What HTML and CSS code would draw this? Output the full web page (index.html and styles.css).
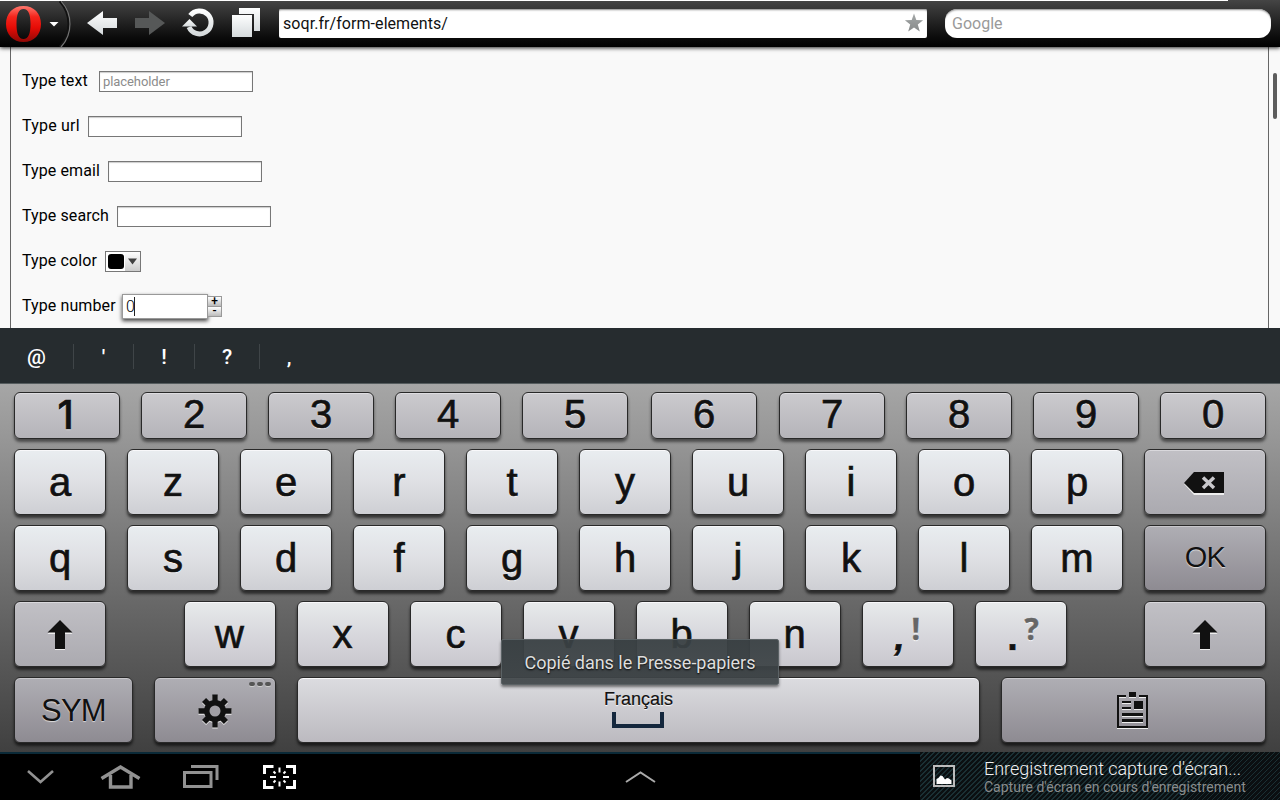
FILE: index.html
```html
<!DOCTYPE html>
<html lang="fr">
<head>
<meta charset="utf-8">
<title>Form elements</title>
<link rel="stylesheet" href="styles.css">
</head>
<body>
<svg width="0" height="0" class="defs">
  <defs>
    <linearGradient id="white" x1="0" y1="0" x2="0" y2="1"><stop offset="0" stop-color="#fdfefe"/><stop offset="1" stop-color="#d5dadc"/></linearGradient>
    <linearGradient id="red" x1="0" y1="0" x2="0" y2="1"><stop offset="0" stop-color="#ff7a70"/><stop offset=".3" stop-color="#f4251c"/><stop offset=".6" stop-color="#e60c06"/><stop offset="1" stop-color="#8e0806"/></linearGradient>
    <linearGradient id="star" x1="0" y1="0" x2="0" y2="1"><stop offset="0" stop-color="#a4a8a8"/><stop offset="1" stop-color="#878a8a"/></linearGradient>
  </defs>
</svg>
<header class="toolbar">
  <div class="progress"></div>
  <svg class="tools" width="278" height="46" viewBox="0 1 278 46">
    <path d="M60 1A34 34 0 0 1 60 47" fill="none" stroke="#111" stroke-width="3"/>
    <path d="M61 1A34 34 0 0 1 61 47" fill="none" stroke="#747474" stroke-width="1.200"/>
    <path d="M23.500 6C13 6 6 13.500 6 24s7 18 17.500 18S41 34.500 41 24 34 6 23.500 6zm0 3c5 0 7 5.500 7 15s-2 15-7 15-7-5.500-7-15 2-15 7-15z" fill="url(#red)" fill-rule="evenodd"/>
    <path d="M49.500 22h9l-4.500 4.500z" fill="#fff"/>
    <path d="M87 23L103 11v7h14v10h-14v7z" fill="url(#white)"/>
    <path d="M165 23L149 11v7h-14v10h14v7z" fill="#565858"/>
    <path d="M190.300 15.600A11.500 11.500 0 1 1 189 27" fill="none" stroke="url(#white)" stroke-width="5"/>
    <path d="M182 26.500L189.500 19l7.500 7.500z" fill="url(#white)"/>
    <path d="M239 8h21v23h-6V14h-15z" fill="url(#white)"/>
    <path d="M232 15h20v22h-20z" fill="url(#white)"/>
  </svg>
  <div class="address"><span>soqr.fr/form-elements/</span>
    <svg width="20" height="20" viewBox="0 0 20 20"><path d="M10 0.500l2.300 6.600 6.800.1-5.300 4.200 2 7L10 14.400 4.200 18.400l2-7L.9 7.200l6.800-.1z" fill="url(#star)"/></svg>
  </div>
  <div class="search">Google</div>
</header>
<main class="page">
  <form class="sheet">
    <div class="field f-text"><label>Type text</label><span class="box ph">placeholder</span></div>
    <div class="field f-url"><label>Type url</label><span class="box"></span></div>
    <div class="field f-email"><label>Type email</label><span class="box"></span></div>
    <div class="field f-search"><label>Type search</label><span class="box"></span></div>
    <div class="field f-color"><label>Type color</label><span class="color"><i class="swatch"></i><i class="drop"><svg width="9" height="7" viewBox="0 0 9 7"><path d="M0 .5h9L4.500 6.500z" fill="#404040"/></svg></i></span></div>
    <div class="field f-number"><label>Type number</label><span class="number">0<i class="caret"></i></span><span class="spin"><b>+</b><b>-</b></span></div>
  </form>
  <div class="scroll"></div>
</main>
<section class="suggest"><span class="s1">@</span><span class="s2">'</span><span class="s3">!</span><span class="s4">?</span><span class="s5">,</span></section>
<section class="keyboard">
  <div class="row nums"><div class="key num one">1</div><div class="key num">2</div><div class="key num">3</div><div class="key num">4</div><div class="key num">5</div><div class="key num">6</div><div class="key num">7</div><div class="key num">8</div><div class="key num">9</div><div class="key num">0</div></div>
  <div class="row"><div class="key">a</div><div class="key">z</div><div class="key">e</div><div class="key">r</div><div class="key">t</div><div class="key">y</div><div class="key">u</div><div class="key">i</div><div class="key">o</div><div class="key">p</div>
    <div class="key mid wide erase"><svg width="42" height="24" viewBox="0 0 42 24"><path d="M1 12L11 2h30v21H11z" fill="#eee"/><path d="M1 11L11 0h30v21H11z" fill="#111"/><path d="M20 5.500l11 10.500M31 5.500L20 16" stroke="#c8c7cb" stroke-width="3.500"/></svg></div></div>
  <div class="row"><div class="key">q</div><div class="key">s</div><div class="key">d</div><div class="key">f</div><div class="key">g</div><div class="key">h</div><div class="key">j</div><div class="key">k</div><div class="key">l</div><div class="key">m</div><div class="key dark wide word ok">OK</div></div>
  <div class="row shiftrow"><div class="key mid"><svg width="26" height="31" viewBox="0 0 26 31"><path d="M13 1l12.500 13H18v16H8V14H.5z" fill="#eee"/><path d="M13 0l12.500 12.500H18V29H8V12.500H.5z" fill="#111"/></svg></div>
    <div class="letters"><div class="key">w</div><div class="key">x</div><div class="key">c</div><div class="key">v</div><div class="key">b</div><div class="key">n</div><div class="key duo"><span class="main comma">,</span><span class="alt">!</span></div><div class="key duo"><span class="main">.</span><span class="alt">?</span></div></div>
    <div class="key mid wide"><svg width="26" height="31" viewBox="0 0 26 31"><path d="M13 1l12.500 13H18v16H8V14H.5z" fill="#eee"/><path d="M13 0l12.500 12.500H18V29H8V12.500H.5z" fill="#111"/></svg></div></div>
  <div class="row last"><div class="key dark sym word">SYM</div>
    <div class="key dark wide gear"><svg width="34" height="35" viewBox="-17 -17 34 35">
      <g fill="#eee" transform="translate(0 1)"><circle r="11"/><path d="M-2.700-16.500h5.400v33h-5.400zM-16.500-2.700v5.400h33v-5.400z"/><path d="M-2.900-15.500h5.800v31h-5.800zM-15.500-2.900v5.800h31v-5.800z" transform="rotate(45)"/></g>
      <g fill="#111"><circle r="11"/><path d="M-2.700-16.500h5.400v33h-5.400zM-16.500-2.700v5.400h33v-5.400z"/><path d="M-2.900-15.500h5.800v31h-5.800zM-15.500-2.900v5.800h31v-5.800z" transform="rotate(45)"/></g><circle r="5.500" fill="#a19fa5"/></svg>
      <span class="dots"><i></i><i></i><i></i></span></div>
    <div class="key space"><span>Français</span><i></i></div>
    <div class="key dark clip"><svg width="31" height="37" viewBox="0 0 31 37"><path d="M9 5H1v31h29V5h-8" stroke="#eee" fill="none" stroke-width="2"/><path d="M12 5.500h7M5 11.500h9M5 17.500h9M17 17.500h9M5 24.500h21M5 30.500h21" stroke="#eee" stroke-width="1"/><path d="M9 4H1v31h29V4h-8" fill="none" stroke="#111" stroke-width="2"/><path d="M12 0h7v5h-7zM17 9h9v8h-9zM5 9h9v2H5zM5 15h9v2H5zM5 21h21v3H5zM5 27h21v3H5z" fill="#111"/></svg></div></div>
  <div class="toast">Copié dans le Presse-papiers</div>
</section>
<footer class="sysbar">
  <svg class="nav" width="660" height="46" viewBox="0 754 660 46" fill="none" stroke="#929292">
    <path d="M28 771l12.500 11L53 771" stroke-width="2.600"/>
    <path d="M101.500 778.500L120.500 767l19 11.500M110.500 775v12h20.500v-12" stroke-width="3.400"/>
    <path d="M184.500 772.500h26.500v14h-26.500zM191 766.500h26V780" stroke-width="3"/>
    <g stroke="#fff"><path d="M264.500 774v-7.500h9M286 766.500h8.500v7.500M264.500 780v7.500h9M286 787.500h8.500V780" stroke-width="3"/><path d="M279.500 767.500v5M279.500 781.500v5M270 777h6M283 777h6M273.500 771.500l2 2M285.500 771.500l-2 2M273.500 782.500l2-2M285.500 782.500l-2-2" stroke-width="2"/></g>
    <path d="M626 782l14.500-9.500L655 782" stroke-width="2" stroke="#aaa"/>
  </svg>
  <div class="notice">
    <svg width="22" height="22" viewBox="0 0 22 22"><path d="M1 1h20v20H1z" fill="none" stroke="#bcbcbc" stroke-width="2"/><path d="M3.500 19v-5l2-1 2-2.500 2 .5 2.500 3.500 2-1.500 2 .5 2.500 2V19z" fill="#fff"/></svg>
    <div><p class="title">Enregistrement capture d'écran...</p><p class="sub">Capture d'écran en cours d'enregistrement</p></div>
  </div>
</footer>
</body>
</html>
```
FILE: styles.css
```css
* { box-sizing: border-box; }
body { margin: 0; width: 1280px; height: 800px; overflow: hidden; background: #000; font-family: Roboto, "Liberation Sans", sans-serif; display: flex; flex-direction: column; }
i, b { font-style: normal; font-weight: normal; }
.defs { position: absolute; }
.toolbar { position: relative; z-index: 2; flex: none; height: 47px; padding-top: 1px; display: flex; align-items: flex-start; background: linear-gradient(#454545, #242424 45%, #0b0b0b 80%, #000); box-shadow: 0 1px 4px rgba(0,0,0,.85); }
.progress { position: absolute; left: 0; top: 0; width: 1228px; height: 1px; background: #fff; }
.tools { flex: none; }
.address, .search { height: 29px; background: #fff; font-size: 16px; line-height: 29px; box-shadow: inset 0 2px 2px -1px #888; margin-top: 8px; }
.address { width: 648px; margin-left: 1px; padding: 0 3px 0 4px; display: flex; justify-content: space-between; border-radius: 2px; color: #111; letter-spacing: .06px; }
.address svg { margin-top: 4px; }
.search { width: 326px; margin-left: 18px; padding-left: 7px; border-radius: 12px; color: #9a9a9a; }
.page { flex: none; height: 281px; background: #f9f9f9; display: flex; }
.sheet { width: 1259px; margin-left: 10px; padding: 12px 0 0 11px; border: 1px solid #666; border-width: 0 1px; background: #f9f9f9; }
.field { height: 45px; display: flex; align-items: center; font-size: 16px; color: #000; }
.field label { line-height: 20px; margin-top: -2px; letter-spacing: .1px; }
.f-text label { width: 77px; }
.f-url label { width: 66px; letter-spacing: .2px; }
.f-email label { width: 86px; }
.f-search label { width: 95px; }
.f-color label { width: 83px; }
.f-number label { width: 100px; }
.box { width: 154px; height: 21px; border: 1px solid #777; background: #fff; box-shadow: inset 0 1px 1px #ccc; font-size: 13px; line-height: 19px; padding-left: 3px; color: #8c8c8c; letter-spacing: -.08px; }
.color { width: 36px; height: 21px; border: 1px solid #777; background: #fff; display: flex; }
.swatch { width: 16px; height: 15px; margin: 2px 1px 0 2px; background: #000; border-radius: 3px; }
.drop { flex: 1; background: linear-gradient(#fff, #ccc); display: flex; align-items: center; justify-content: center; }
.number { width: 86px; height: 25px; border: 1px solid #999; background: #fff; box-shadow: 0 2px 4px rgba(0,0,0,.75); font-weight: 300; line-height: 24px; padding-left: 3px; display: flex; letter-spacing: -.8px; }
.caret { width: 1px; height: 19px; background: #222; margin-top: 2px; }
.spin { width: 14px; height: 21px; border: 1px solid #999; border-left: 0; display: flex; flex-direction: column; }
.spin b { flex: 1; height: 9px; font-size: 12px; line-height: 9px; text-align: center; background: linear-gradient(#fff, #bbb); font-weight: 500; }
.spin b + b { border-top: 1px solid #999; }
.scroll { width: 4px; height: 46px; margin: 26px 0 0 4px; border-radius: 2px; background: #5c5c5c; }
.suggest { flex: none; height: 55px; padding-top: 16px; background: #262c2f; color: #fff; display: flex; font-size: 21px; line-height: 27px; font-weight: 500; }
.suggest span { height: 25px; text-align: center; border-right: 1px solid #3f4548; }
.s1 { width: 74px; } .s2 { width: 60px; } .s3 { width: 61px; } .s4 { width: 65px; }
.suggest .s5 { width: 58px; border: 0; }
.keyboard { position: relative; flex: none; height: 369px; padding: 8px 14px 0; border-top: 1px solid #555c5e; background: linear-gradient(#a6a6a6, #7c7c7c 40%, #5b5b5b 72%, #404040); display: flex; flex-direction: column; gap: 9px; font-family: "Liberation Sans", Arial, sans-serif; }
.row { display: flex; gap: 21px; height: 67px; flex: none; }
.nums { height: 48px; }
.key { width: 92px; height: 66px; flex: none; display: flex; align-items: center; justify-content: center; border: 1px solid #292929; border-radius: 6px; background: linear-gradient(#e9edf0, #dfe0e4 50%, #cecfd4); box-shadow: inset 0 1px #f8f8fa, 0 3px 3px rgba(0,0,0,.6); font-size: 40px; line-height: 44px; color: #111; text-shadow: 0 1px 1px #fff; -webkit-text-stroke: .7px #111; padding-bottom: 1px; }
.num { width: 106px; height: 47px; background: linear-gradient(#cbcace, #b5b4b9); box-shadow: inset 0 1px #dedde1, 0 3px 3px rgba(0,0,0,.5); padding-bottom: 3px; }
.one { font-family: Inter, sans-serif; font-size: 39px; font-weight: 500; padding: 0 3px 2px 0; }
.num:nth-child(6) { margin-left: 2px; }
.num:nth-child(7) { margin-left: 1px; }
.wide { width: 122px; }
.mid { background: linear-gradient(#c1c0c5, #abaab0); box-shadow: inset 0 1px #d9d8dc, 0 3px 3px rgba(0,0,0,.6); padding: 2px 0 0; }
.erase { padding: 4px 2px 0 0; }
.dark { background: linear-gradient(#afaeb4, #8e8b92); box-shadow: inset 0 1px #c9c8cc, 0 3px 3px rgba(0,0,0,.6); }
.word { font-size: 31px; -webkit-text-stroke: 0; padding: 2px 0 0; text-shadow: 0 1px 1px #ddd; letter-spacing: -.8px; }
.ok { font-size: 29px; padding: 0 0 3px; }
.shiftrow { justify-content: space-between; }
.shiftrow .key:not(.mid) { background: linear-gradient(#e8eaeb, #d8d8dd 50%, #c9c8ce); }
.letters { display: flex; gap: 21px; }
.duo { position: relative; }
.main { position: absolute; left: 32px; top: 14px; font-size: 36px; font-weight: bold; }
.comma { font-style: italic; }
.alt { position: absolute; left: 49px; top: 5px; font: bold 30px/44px "Open Sans", sans-serif; color: #666; -webkit-text-stroke: .4px #666; }
.sym { width: 119px; }
.gear { position: relative; padding: 3px 1px 0 0; }
.dots { position: absolute; right: 4px; top: 4px; display: flex; gap: 2px; }
.dots i { width: 6px; height: 4px; border-radius: 2px; background: #555; box-shadow: 0 1px #ccc; }
.space { width: 683px; flex-direction: column; justify-content: flex-start; background: linear-gradient(#dcdce0, #bcbac0); font-size: 18px; line-height: 22px; padding-top: 10px; -webkit-text-stroke: .2px #111; }
.space i { width: 52px; height: 16px; border: 4px solid #14273d; border-top: 0; margin: 2px 2px 0 0; }
.clip { width: 265px; padding: 0 2px 0 0; }
.toast { position: absolute; left: 501px; top: 255px; width: 278px; height: 46px; background: linear-gradient(rgba(57,64,67,.95), rgba(63,69,72,.92)); border: 1px solid #5b6265; border-radius: 2px; box-shadow: 0 2px 3px rgba(0,0,0,.5); color: #dedede; font: 18px/46px Roboto, sans-serif; text-align: center; text-shadow: 0 1px 2px #000; letter-spacing: -.03px; }
.sysbar { flex: none; height: 48px; display: flex; justify-content: space-between; background: #000; border-top: 2px solid #0b2a38; }
.notice { width: 360px; height: 48px; margin-top: -2px; padding: 13px 0 0 13px; display: flex; gap: 29px; background: repeating-linear-gradient(135deg, #0b0f11 0 2.800px, #1a3034 2.800px 3.536px); color: #ddd; }
.notice div { margin-top: -6px; white-space: nowrap; }
.notice p { margin: 0; }
.title { font-size: 18px; line-height: 20px; font-weight: 300; color: #f1f1f1; letter-spacing: -.04px; }
.sub { font-size: 14px; line-height: 17px; color: #898c8d; }
```
